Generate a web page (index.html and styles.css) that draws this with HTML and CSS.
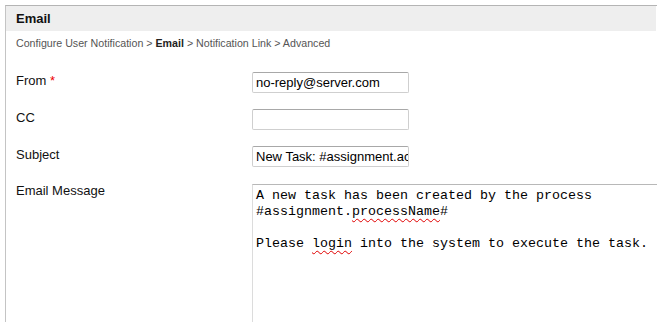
FILE: index.html
```html
<!DOCTYPE html>
<html>
<head>
<meta charset="utf-8">
<link rel="stylesheet" href="styles.css">
</head>
<body>
<div class="panel">
  <div class="header">Email</div>
  <div class="crumbs">Configure User Notification &gt; <b>Email</b> &gt; Notification Link &gt; Advanced</div>
  <div class="form">
    <div class="row">
      <label class="label">From <span class="req">*</span></label>
      <div class="input">no-reply@server.com</div>
    </div>
    <div class="row">
      <label class="label">CC</label>
      <div class="input"></div>
    </div>
    <div class="row">
      <label class="label">Subject</label>
      <div class="input">New Task: #assignment.activityName#</div>
    </div>
    <div class="row row-msg">
      <label class="label label-msg">Email Message</label>
      <div class="textarea">A new task has been created by the process
#assignment.<span class="spell">processName</span>#

Please <span class="spell">login</span> into the system to execute the task.</div>
    </div>
  </div>
</div>
</body>
</html>
```
FILE: styles.css
```css
html, body {
  margin: 0;
  padding: 0;
  background: #fff;
  overflow: hidden;
}
body {
  font-family: "Liberation Sans", Arial, sans-serif;
  color: #000;
  width: 657px;
  height: 322px;
}
.panel {
  box-sizing: border-box;
  margin: 5px 0 0 5px;
  height: 317px;
  border-top: 1px solid #b4b4b4;
  border-left: 1px solid #c4c4c4;
  overflow: hidden;
  display: flex;
  flex-direction: column;
}
.header {
  background: #eeeeee;
  height: 25px;
  line-height: 25px;
  padding: 0 10px;
  font-size: 13px;
  font-weight: bold;
  color: #111;
  margin-right: 1px;
  flex: none;
}
.crumbs {
  padding: 6px 10px 0;
  font-size: 10.67px;
  line-height: 13px;
  color: #555;
  flex: none;
}
.crumbs b {
  color: #222;
}
.form {
  flex: 1;
  min-height: 0;
  padding: 22px 0 0 10px;
  display: flex;
  flex-direction: column;
}
.row {
  display: flex;
  align-items: flex-start;
  margin-bottom: 16px;
  flex: none;
}
.row-msg {
  flex: 1;
  min-height: 0;
  margin-bottom: 0;
  align-items: stretch;
}
.label {
  width: 236px;
  flex: none;
  font-size: 13px;
  line-height: 16px;
  padding-top: 1px;
  color: #111;
}
.label-msg {
  padding-top: 0;
}
.req {
  color: #e00;
}
.input {
  box-sizing: border-box;
  width: 157px;
  height: 21px;
  border: 1px solid #cfcfcf;
  border-top-color: #a8a8a8;
  border-radius: 2px;
  padding: 0 3px;
  font-size: 13px;
  line-height: 19px;
  white-space: nowrap;
  overflow: hidden;
  color: #000;
}
.textarea {
  box-sizing: border-box;
  flex: 1;
  min-width: 0;
  margin-top: 1px;
  border: 1px solid #dcdcdc;
  border-top-color: #b8b8b8;
  border-right: none;
  border-bottom: none;
  padding: 3px 0 0 3px;
  font-family: "Liberation Mono", "Courier New", monospace;
  font-size: 13.33px;
  line-height: 16px;
  white-space: pre;
  overflow: hidden;
  color: #000;
}
.spell {
  text-decoration: underline wavy #e00000;
  text-decoration-thickness: 1px;
  text-underline-offset: 3px;
  text-decoration-skip-ink: none;
}
```
